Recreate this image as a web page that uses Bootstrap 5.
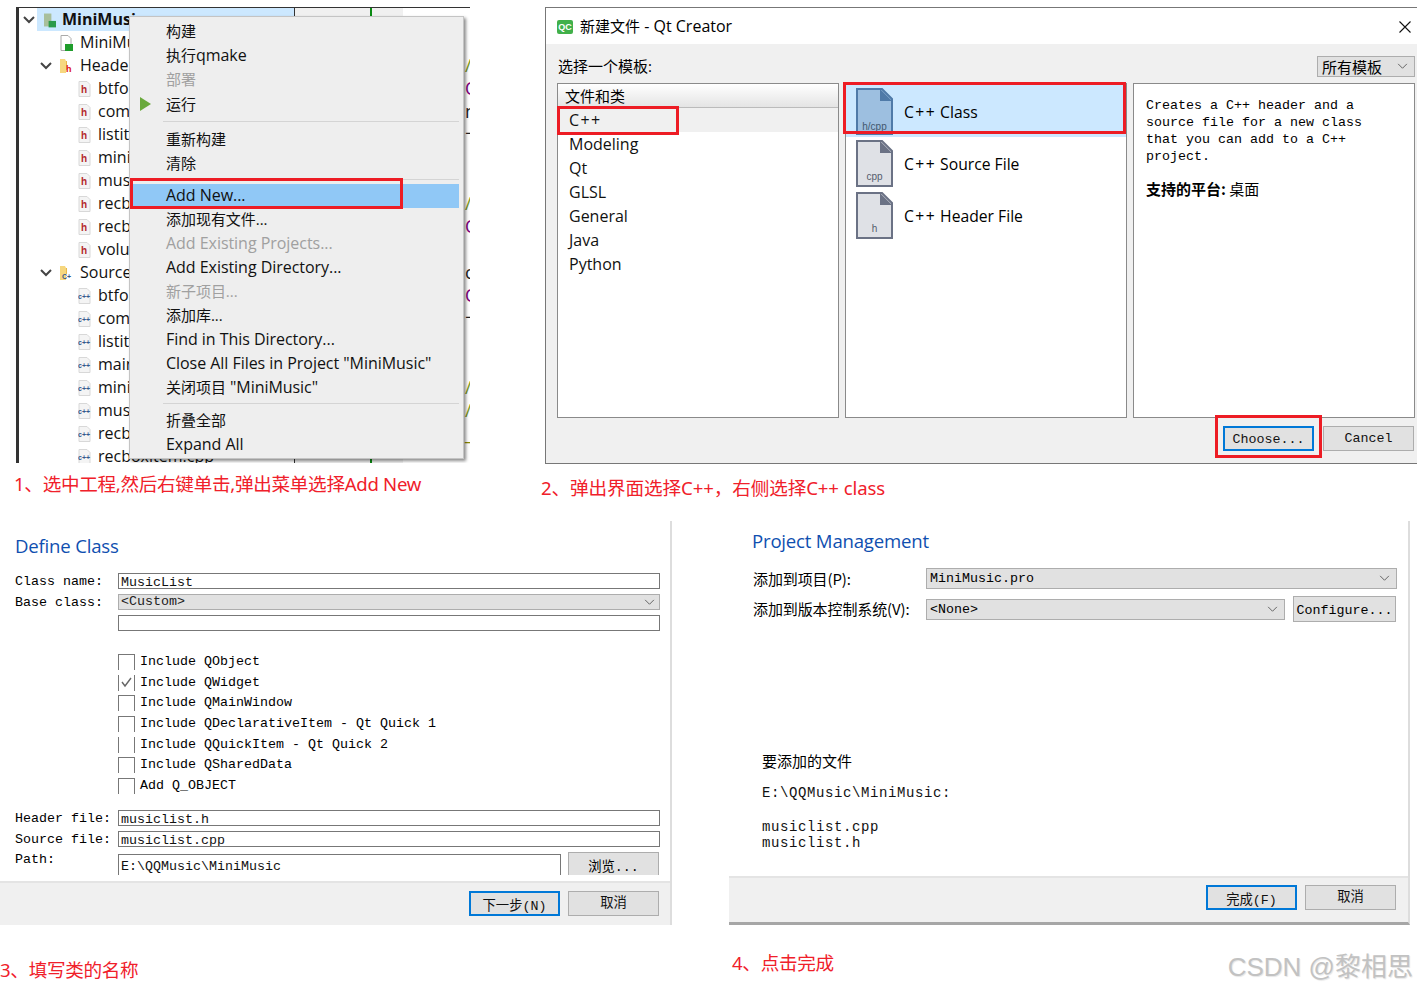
<!DOCTYPE html>
<html lang="zh"><head><meta charset="utf-8"><title>Qt Creator</title>
<link href="https://cdn.jsdelivr.net/npm/bootstrap@5.3.0/dist/css/bootstrap.min.css" rel="stylesheet">
<style>
:root{--ui:"Open Sans","Noto Sans CJK SC",sans-serif;--sim:"Liberation Mono","Noto Sans CJK SC",monospace}
html,body{background:#fff}
body{margin:0;width:1417px;height:993px;overflow:hidden;font-family:var(--ui);color:#000;font-size:16px;line-height:1.2}
.sheet{padding-top:7px}
.top-row{height:514px}
.cell-a{width:541px;padding-left:16px}
.cell-b{width:876px;padding-left:4px}
.cj{font-size:15px}
.redbox{position:absolute;border:3px solid #ed1c24;pointer-events:none;z-index:5}
.cap{color:#f0202a;font-size:18.6px;font-family:"Noto Sans","Noto Sans CJK SC",sans-serif;white-space:nowrap;letter-spacing:-.3px}
.cap-1{margin-top:10px;margin-left:-2px}
.cap-2{margin-top:13px;margin-left:-4px;letter-spacing:-.1px}
/* panel 1 */
.ide{width:454px;height:456px;overflow:hidden;border-top:1px solid #333;border-left:3px solid #333;font-size:16px}
.tree{width:275px;flex:none}
.trow{height:23px;white-space:nowrap;color:#111}
.trow svg{flex:none}
.chev0{margin:0 2px 0 4px}
.sel-row{background:#cce8ff;flex:1;height:23px;padding-left:7px;font-weight:700}
.ind1{padding-left:41px}.ind1b{padding-left:21px}.ind2{padding-left:59px}
.mr6{margin-right:6px}.mr7{margin-right:7px}
.chev{margin-right:7px}
.gutter{width:109px;flex:none;background:#f0f0f0;border-left:1px solid #333;display:flex}
.gutter-line{width:2px;background:#0a8a12;margin-left:75px}
.code{flex:1;padding-left:62px;font-size:18px}
.cline{height:23px;line-height:23px}
.cg{color:#7a9a1a}.cp{color:#800080}.cd{color:#222}.co{color:#8a8a00}
.qmenu.dropdown-menu{position:absolute;display:block;left:110px;top:8px;width:335px;height:443px;min-width:0;margin:0;padding:3px 4px 0 3px;background:#eee;border:1px solid #c4c4c4;border-radius:0;box-shadow:2px 2px 3px rgba(0,0,0,.45);font-size:16px;z-index:3}
.qmenu .dropdown-item{height:24px;line-height:23px;padding:0 0 0 33px;color:#111;white-space:nowrap;background:transparent;letter-spacing:-.04px}
.qmenu .dropdown-item.disabled{color:#a0a0a0}
.qmenu .dropdown-item.active{background:#90c8f6;color:#111}
.qmenu .run-item{padding-left:7px}
.run-item svg{margin-right:15px}
.qmenu .dropdown-divider{margin:5px 0 6px 30px;border-color:#d4d4d4;opacity:1}
.qmenu .div-b{margin:3px 0 4px 30px}
.qmenu .div-c{margin:3px 0 5px 30px}
.rb-add{left:0;top:161px;width:273px;height:31px}
/* panel 2 */
.newfile{width:872px;height:457px;overflow:hidden;border-top:1px solid #777;border-left:1px solid #777;border-bottom:1px solid #777;background:#f0f0f0;font-size:16px}
.titlebar{height:36px;background:#fff;padding:2px 6px 0 11px}
.qc{width:16px;height:14px;background:#41b04a;border-radius:2px;color:#fff;font:700 9px/14px "Liberation Sans",sans-serif;text-align:center;margin-right:7px}
.closex{margin-left:auto}
.pick{height:39px;padding:12px 2px 0 12px}
.pick-label{line-height:20px}
.combo{border:1px solid #adadad;background:#e1e1e1;display:flex;align-items:center;white-space:nowrap}
.combo svg{margin-left:auto;flex:none}
.c-all{width:98px;height:21px;padding:0 6px 0 4px}
.panes{gap:6px;padding-left:11px;padding-right:2px;height:335px}
.pane{width:282px;background:#fff;border:1px solid #8a8a8a;flex:none}
.pane.list-group{border-radius:0}
.cathead{height:24px;line-height:25px;padding-left:7px;background:linear-gradient(#fff,#e4e4e4);border-bottom:1px solid #bbb}
.pane .list-group-item{border:0;border-radius:0;height:24px;line-height:24px;padding:0 0 0 11px;background:transparent;color:#111}
.pane .list-group-item.cur{background:#f0f0f0;letter-spacing:1.4px}
.rb-cpp{left:-1px;top:22px;width:122px;height:29px}
.tmpl{height:52px;padding-left:10px;font-size:15.7px}
.tmpl svg{margin-right:11px}
.tmpl>span{margin-top:3px}
.tmpl-on{background:#cce8ff;margin-top:1px}
.cpp-sp{letter-spacing:1.4px}
.rb-class{left:-3px;top:-2px;width:283px;height:52px}
.desc{padding:13px 40px 12px 12px;font-family:var(--sim);font-size:13.33px;line-height:17px}
.desc-zh{margin-top:15px;font-family:"Noto Sans CJK SC",sans-serif;font-size:15px;line-height:18px;white-space:nowrap}
.bottom2{padding:8px 3px 0 0;gap:9px;justify-content:flex-end}
.qbtn.btn{--bs-btn-border-radius:0;width:91px;height:25px;padding:0;border:1px solid #adadad;background:#e1e1e1;color:#111;font-family:var(--sim);font-size:13.33px;line-height:24px;border-radius:0}
.qbtn.dflt{border:2px solid #0078d7}
.rb-choose{right:95px;top:-3px;width:107px;height:43px}
/* panel 3 */
.bottom-row{height:404px}
.wiz3{width:672px;height:404px;border-right:2px solid #ddd;overflow:hidden;font-family:var(--sim);font-size:13.33px}
.wiz-title{color:#0f4fb0;font-family:"Open Sans",sans-serif;font-size:18.6px;line-height:30px;letter-spacing:-.2px}
.w3-body{padding:10px 10px 0 15px;height:360px;flex:none}
.w3-title{height:42px}
.frow{height:16px;margin-bottom:5px}
.flabel{width:103px;flex:none;white-space:nowrap;line-height:16px;padding-top:1px}
.qin.form-control{flex:1;min-height:0;height:16px;padding:0 2px;border:1px solid #777;border-radius:0;font-family:var(--sim);font-size:13.33px;line-height:17px;overflow:hidden;white-space:nowrap;color:#111;background:#fff}
.qsel{flex:1;height:16px;border:1px solid #adadad;background:#e1e1e1;padding:0 4px 0 2px;font-size:13.33px;overflow:hidden;color:#222}
.checks{margin:23px 0 11px 103px}
.chk{height:20.67px;white-space:nowrap;line-height:15px}
.cbx{width:17px;height:16px;margin-right:5px;border:1px solid #777;border-bottom:0;flex:none;display:block}
.cbx.notop{border-top:0}
.path-row{height:23px}
.qin-path.form-control{flex:none;width:443px;height:21px;border-bottom:0;align-self:flex-end;line-height:23px}
.browse{width:91px;height:23px;margin-left:7px;border:1px solid #adadad;border-bottom:0;background:#e1e1e1;text-align:center;line-height:25px}
.path-label{line-height:14px;align-self:flex-start}
.qbar{background:#f0f0f0;border-top:2px solid #e4e4e4;gap:8px;justify-content:flex-end}
.bar3{height:44px;padding:8px 11px 0 0}
.zh{font-family:"Noto Sans CJK SC",sans-serif}
.cap-3{margin-top:34px;margin-left:0}
/* panel 4 */
.cell-4{margin-left:57px;width:688px}
.wiz4{width:681px;height:404px;border-right:2px solid #ddd;border-bottom:3px solid #a6a6a6;font-family:var(--sim);font-size:13.33px;overflow:hidden}
.w4-body{height:355px;flex:none;padding:5px 11px 0 24px}
.w4-title{height:42px;margin-left:-1px}
.prow{height:21px}
.plabel{width:173px;flex:none;font-family:"Noto Sans CJK SC",sans-serif;font-size:15px;white-space:nowrap;letter-spacing:-.1px}
.pl2{padding-top:1px}
.pcombo{height:21px;padding:0 6px 0 3px;flex:1}
.prow2{margin-top:10px;height:20px}
.pcombo2{height:21px;flex:none;width:359px;padding:0 6px 0 3px}
.cfg{width:103px;height:26px;margin-left:8px;border:1px solid #adadad;background:#e1e1e1;text-align:center;line-height:27px;margin-top:-3px;white-space:nowrap}
.files{margin:132px 0 0 9px}
.fhead{font-family:"Noto Sans CJK SC",sans-serif;font-size:15px;line-height:20px}
.fmono{font-family:"Liberation Mono",monospace;font-size:14px;letter-spacing:.6px;line-height:16px;white-space:pre;color:#111}
.fdir{margin:14px 0 18px}
.bar4{height:46px;padding:7px 12px 0 0}
.foot4{height:52px;padding:21px 4px 0 0;width:688px}
.cap-4{margin-left:3px;margin-top:6px}
.mark-csdn{color:#c2c2c2;font-size:26px;font-family:"Liberation Sans","Noto Sans CJK SC",sans-serif;margin-left:auto;margin-top:6px;text-shadow:1px 1px 1px #e6e6e6;white-space:nowrap}
</style></head>
<body>
<svg width="0" height="0" class="position-absolute">
<defs>
<symbol id="chv" viewBox="0 0 12 8"><path d="M1 1l5 5 5-5" fill="none" stroke="#444" stroke-width="2"/></symbol>
<symbol id="dn" viewBox="0 0 12 8"><path d="M1 1l5 5 5-5" fill="none" stroke="#555" stroke-width="1"/></symbol>
<symbol id="fh" viewBox="0 0 13 16"><path d="M1 .5h8l3 3v12H1z" fill="#f4f4f4" stroke="#d8d8d8"/><text x="3" y="12" font-family="Liberation Sans" font-weight="700" font-size="10" fill="#b5282e">h</text></symbol>
<symbol id="fc" viewBox="0 0 13 16"><path d="M1 .5h8l3 3v12H1z" fill="#f4f4f4" stroke="#d8d8d8"/><text x="0" y="11" font-family="Liberation Sans" font-weight="700" font-size="7" fill="#35588c">c++</text></symbol>
<symbol id="foldh" viewBox="0 0 14 16"><path d="M1 1h5l1 2v12H1z" fill="#f6d77f"/><path d="M7 3h1v9H7z" fill="#e8b84a"/><text x="7" y="14" font-family="Liberation Sans" font-weight="700" font-size="9" fill="#d11">h</text></symbol>
<symbol id="foldc" viewBox="0 0 14 16"><path d="M1 1h5l1 2v12H1z" fill="#f6d77f"/><path d="M7 3h1v6H7z" fill="#e8b84a"/><text x="3" y="14" font-family="Liberation Sans" font-weight="700" font-size="7" fill="#35588c">C+</text></symbol>
</defs></svg>
<div class="sheet">
<div class="top-row d-flex">
 <div class="cell-a">
  <div class="ide position-relative d-flex">
   <div class="tree">
    <div class="trow d-flex align-items-center"><svg width="12" height="8" class="chev0"><use href="#chv"/></svg><div class="sel-row d-flex align-items-center"><svg width="12" height="16" viewBox="0 0 13 16" class="mr6"><path d="M0 1h8v14H0z" fill="#a9bf9c"/><rect x="5" y="9" width="8" height="7" fill="#2c9a4a"/></svg><span>MiniMusic</span></div></div>
    <div class="trow d-flex align-items-center ind1"><svg width="13" height="16" class="mr7" viewBox="0 0 13 16"><path d="M1 .5h7l3 3v12H1z" fill="#fff" stroke="#aaa"/><rect x="5" y="9" width="8" height="7" fill="#1f9d2c"/></svg><span>MiniMu</span></div>
    <div class="trow d-flex align-items-center ind1b"><svg width="12" height="8" class="chev"><use href="#chv"/></svg><svg width="14" height="16" class="mr7"><use href="#foldh"/></svg><span>Heade</span></div>
    <div class="trow d-flex align-items-center ind2"><svg width="13" height="16" class="mr7"><use href="#fh"/></svg>btfo</div>
    <div class="trow d-flex align-items-center ind2"><svg width="13" height="16" class="mr7"><use href="#fh"/></svg>com</div>
    <div class="trow d-flex align-items-center ind2"><svg width="13" height="16" class="mr7"><use href="#fh"/></svg>listit</div>
    <div class="trow d-flex align-items-center ind2"><svg width="13" height="16" class="mr7"><use href="#fh"/></svg>mini</div>
    <div class="trow d-flex align-items-center ind2"><svg width="13" height="16" class="mr7"><use href="#fh"/></svg>mus</div>
    <div class="trow d-flex align-items-center ind2"><svg width="13" height="16" class="mr7"><use href="#fh"/></svg>recb</div>
    <div class="trow d-flex align-items-center ind2"><svg width="13" height="16" class="mr7"><use href="#fh"/></svg>recb</div>
    <div class="trow d-flex align-items-center ind2"><svg width="13" height="16" class="mr7"><use href="#fh"/></svg>volu</div>
    <div class="trow d-flex align-items-center ind1b"><svg width="12" height="8" class="chev"><use href="#chv"/></svg><svg width="14" height="16" class="mr7"><use href="#foldc"/></svg><span>Source</span></div>
    <div class="trow d-flex align-items-center ind2"><svg width="13" height="16" class="mr7"><use href="#fc"/></svg>btfo</div>
    <div class="trow d-flex align-items-center ind2"><svg width="13" height="16" class="mr7"><use href="#fc"/></svg>com</div>
    <div class="trow d-flex align-items-center ind2"><svg width="13" height="16" class="mr7"><use href="#fc"/></svg>listit</div>
    <div class="trow d-flex align-items-center ind2"><svg width="13" height="16" class="mr7"><use href="#fc"/></svg>main</div>
    <div class="trow d-flex align-items-center ind2"><svg width="13" height="16" class="mr7"><use href="#fc"/></svg>mini</div>
    <div class="trow d-flex align-items-center ind2"><svg width="13" height="16" class="mr7"><use href="#fc"/></svg>mus</div>
    <div class="trow d-flex align-items-center ind2"><svg width="13" height="16" class="mr7"><use href="#fc"/></svg>recb</div>
    <div class="trow d-flex align-items-center ind2"><svg width="13" height="16" class="mr7"><use href="#fc"/></svg>recboxitem.cpp</div>
   </div>
   <div class="gutter"><div class="gutter-line"></div></div>
   <div class="code">
    <div class="cline"></div><div class="cline"></div><div class="cline cg">/</div><div class="cline cp">Q</div><div class="cline cd">m</div><div class="cline cd">十</div><div class="cline"></div><div class="cline"></div><div class="cline cg">/</div><div class="cline cp">Q</div><div class="cline"></div><div class="cline cd">c</div><div class="cline cp">Q</div><div class="cline cd">十</div><div class="cline"></div><div class="cline"></div><div class="cline cg">/</div><div class="cline cg">/</div><div class="cline co">_</div>
   </div>
   <div class="qmenu dropdown-menu">
    <a class="dropdown-item"><span class="cj">构建</span></a>
    <a class="dropdown-item"><span class="cj">执行</span>qmake</a>
    <a class="dropdown-item disabled"><span class="cj">部署</span></a>
    <a class="dropdown-item run-item d-flex align-items-center"><svg width="11" height="14" viewBox="0 0 11 14"><path d="M0 0l11 7-11 7z" fill="#6aa93c"/></svg><span class="cj">运行</span></a>
    <hr class="dropdown-divider">
    <a class="dropdown-item"><span class="cj">重新构建</span></a>
    <a class="dropdown-item"><span class="cj">清除</span></a>
    <hr class="dropdown-divider div-b">
    <a class="dropdown-item active">Add New...</a>
    <a class="dropdown-item"><span class="cj">添加现有文件...</span></a>
    <a class="dropdown-item disabled">Add Existing Projects...</a>
    <a class="dropdown-item">Add Existing Directory...</a>
    <a class="dropdown-item disabled"><span class="cj">新子项目...</span></a>
    <a class="dropdown-item"><span class="cj">添加库...</span></a>
    <a class="dropdown-item">Find in This Directory...</a>
    <a class="dropdown-item">Close All Files in Project "MiniMusic"</a>
    <a class="dropdown-item"><span class="cj">关闭项目</span> "MiniMusic"</a>
    <hr class="dropdown-divider div-c">
    <a class="dropdown-item"><span class="cj">折叠全部</span></a>
    <a class="dropdown-item">Expand All</a>
    <div class="redbox rb-add"></div>
   </div>
  </div>
  <div class="cap cap-1">1、选中工程,然后右键单击,弹出菜单选择Add New</div>
 </div>
 <div class="cell-b">
  <div class="newfile">
   <div class="titlebar d-flex align-items-center"><span class="qc">QC</span><span><span class="cj">新建文件</span> - Qt Creator</span>
    <svg class="closex" width="12" height="12" viewBox="0 0 12 12"><path d="M.5.5l11 11M11.500.5l-11 11" stroke="#111" stroke-width="1.100"/></svg></div>
   <div class="pick d-flex align-items-start justify-content-between"><span class="cj pick-label">选择一个模板:</span>
    <div class="combo c-all"><span class="cj">所有模板</span><svg width="11" height="7"><use href="#dn"/></svg></div></div>
   <div class="panes d-flex">
    <div class="pane list-group position-relative">
     <div class="cathead cj">文件和类</div>
     <div class="list-group-item cur">C++</div>
     <div class="list-group-item">Modeling</div>
     <div class="list-group-item">Qt</div>
     <div class="list-group-item">GLSL</div>
     <div class="list-group-item">General</div>
     <div class="list-group-item">Java</div>
     <div class="list-group-item">Python</div>
     <div class="redbox rb-cpp"></div>
    </div>
    <div class="pane position-relative">
     <div class="tmpl tmpl-on d-flex align-items-center"><svg width="37" height="47" viewBox="0 0 37 47"><path d="M1 1h25l10 10v35H1z" fill="#9dbfe0" stroke="#4f7aa8" stroke-width="2"/><path d="M24 1l12 12H24z" fill="#4f7aa8"/><text x="18.500" y="42" text-anchor="middle" font-family="Liberation Sans" font-size="10" fill="#43586e">h/cpp</text></svg><span><span class="cpp-sp">C++</span> Class</span></div>
     <div class="tmpl d-flex align-items-center"><svg width="37" height="47" viewBox="0 0 37 47"><path d="M1 1h25l10 10v35H1z" fill="#dfe1e6" stroke="#6b7285" stroke-width="2"/><path d="M24 1l12 12H24z" fill="#6b7285"/><text x="18.500" y="40" text-anchor="middle" font-family="Liberation Sans" font-size="10" fill="#555c6c">cpp</text></svg><span><span class="cpp-sp">C++</span> Source File</span></div>
     <div class="tmpl d-flex align-items-center"><svg width="37" height="47" viewBox="0 0 37 47"><path d="M1 1h25l10 10v35H1z" fill="#dfe1e6" stroke="#6b7285" stroke-width="2"/><path d="M24 1l12 12H24z" fill="#6b7285"/><text x="18.500" y="40" text-anchor="middle" font-family="Liberation Sans" font-size="10" fill="#555c6c">h</text></svg><span><span class="cpp-sp">C++</span> Header File</span></div>
     <div class="redbox rb-class"></div>
    </div>
    <div class="pane desc">Creates a C++ header and a source file for a new class that you can add to a C++ project.
     <div class="desc-zh"><b>支持的平台:</b> 桌面</div></div>
   </div>
   <div class="bottom2 d-flex position-relative">
    <button class="btn qbtn dflt" type="button">Choose...</button>
    <button class="btn qbtn" type="button">Cancel</button>
    <div class="redbox rb-choose"></div>
   </div>
  </div>
  <div class="cap cap-2">2、弹出界面选择C++，右侧选择C++ class</div>
 </div>
</div>
<div class="bottom-row d-flex">
 <div>
  <div class="wiz3 d-flex flex-column">
   <div class="w3-body">
    <div class="w3-title wiz-title">Define Class</div>
    <div class="frow d-flex"><div class="flabel">Class name:</div><div class="qin form-control">MusicList</div></div>
    <div class="frow d-flex"><div class="flabel">Base class:</div><div class="qsel combo">&lt;Custom&gt;<svg width="11" height="7"><use href="#dn"/></svg></div></div>
    <div class="frow d-flex"><div class="flabel"></div><div class="qin form-control"></div></div>
    <div class="checks">
     <div class="chk d-flex"><span class="cbx"></span>Include QObject</div>
     <div class="chk d-flex"><span class="cbx notop"><svg width="15" height="15" viewBox="0 0 15 15"><path d="M3 7l3 4 6-8" fill="none" stroke="#666" stroke-width="1.400"/></svg></span>Include QWidget</div>
     <div class="chk d-flex"><span class="cbx"></span>Include QMainWindow</div>
     <div class="chk d-flex"><span class="cbx"></span>Include QDeclarativeItem - Qt Quick 1</div>
     <div class="chk d-flex"><span class="cbx notop"></span>Include QQuickItem - Qt Quick 2</div>
     <div class="chk d-flex"><span class="cbx"></span>Include QSharedData</div>
     <div class="chk d-flex"><span class="cbx"></span>Add Q_OBJECT</div>
    </div>
    <div class="frow d-flex"><div class="flabel">Header file:</div><div class="qin form-control">musiclist.h</div></div>
    <div class="frow d-flex"><div class="flabel">Source file:</div><div class="qin form-control">musiclist.cpp</div></div>
    <div class="path-row d-flex"><div class="flabel path-label">Path:</div><div class="qin qin-path form-control">E:\QQMusic\MiniMusic</div><div class="browse"><span class="zh">浏览</span>...</div></div>
   </div>
   <div class="qbar bar3 d-flex">
    <button class="btn qbtn dflt" type="button"><span class="zh">下一步</span>(N)</button>
    <button class="btn qbtn zh" type="button">取消</button>
   </div>
  </div>
  <div class="cap cap-3">3、填写类的名称</div>
 </div>
 <div class="cell-4">
  <div class="wiz4 d-flex flex-column">
   <div class="w4-body">
    <div class="w4-title wiz-title">Project Management</div>
    <div class="prow d-flex align-items-center"><div class="plabel">添加到项目(P):</div><div class="combo pcombo">MiniMusic.pro<svg width="11" height="7"><use href="#dn"/></svg></div></div>
    <div class="prow2 d-flex align-items-start"><div class="plabel pl2">添加到版本控制系统(V):</div><div class="combo pcombo2">&lt;None&gt;<svg width="11" height="7"><use href="#dn"/></svg></div><div class="cfg">Configure...</div></div>
    <div class="files">
     <div class="fhead">要添加的文件</div>
     <div class="fmono fdir">E:\QQMusic\MiniMusic:</div>
     <div class="fmono">musiclist.cpp
musiclist.h</div>
    </div>
   </div>
   <div class="qbar bar4 d-flex">
    <button class="btn qbtn dflt" type="button"><span class="zh">完成</span>(F)</button>
    <button class="btn qbtn zh" type="button">取消</button>
   </div>
  </div>
  <div class="foot4 d-flex">
   <div class="cap cap-4">4、点击完成</div>
   <div class="mark-csdn">CSDN @黎相思</div>
  </div>
 </div>
</div>
</div>
<script src="https://cdn.jsdelivr.net/npm/bootstrap@5.3.0/dist/js/bootstrap.bundle.min.js"></script>
</body></html>
